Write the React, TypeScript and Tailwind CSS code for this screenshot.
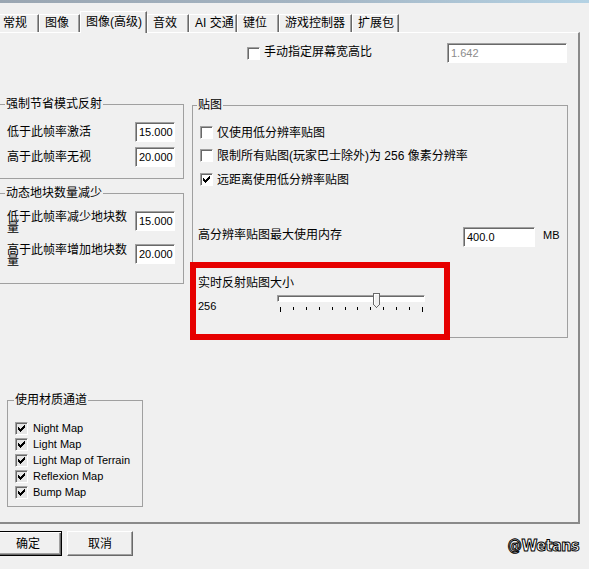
import type { ReactNode } from 'react'

const tabs = [
  { label: '常规', w: 'w-[42px] -ml-[3px]', active: false },
  { label: '图像', w: 'w-[41px]', active: false },
  { label: '图像(高级)', w: 'w-[67px]', active: true },
  { label: '音效', w: 'w-[42px]', active: false },
  { label: 'AI 交通', w: 'w-[48px]', active: false },
  { label: '键位', w: 'w-[42px]', active: false },
  { label: '游戏控制器', w: 'w-[73px]', active: false },
  { label: '扩展包', w: 'w-[47px]', active: false },
]

const materials = ['Night Map', 'Light Map', 'Light Map of Terrain', 'Reflexion Map', 'Bump Map']

// pixel runs of the classic 7x7 check glyph
const checkRuns: [number, number, number][] = [
  [8, 2, 1], [7, 3, 2], [2, 4, 1], [6, 4, 3], [2, 5, 2], [5, 5, 3], [2, 6, 5], [3, 7, 3], [4, 8, 1],
]

function Checkbox({ checked = false, grey = false }: { checked?: boolean; grey?: boolean }) {
  return (
    <span
      className={`relative inline-block w-[13px] h-[13px] shrink-0 border border-t-[#a0a0a0] border-l-[#a0a0a0] border-r-white border-b-white shadow-[inset_1px_1px_0_#696969] ${
        grey ? 'bg-[#e6e6e6]' : 'bg-white'
      }`}
    >
      {checked && (
        <svg width="11" height="11" viewBox="0 0 11 11" className="absolute left-0 top-0" shapeRendering="crispEdges">
          {checkRuns.map(([x, y, w]) => (
            <rect key={`${x}-${y}`} x={x} y={y} width={w} height={1} fill="#000" />
          ))}
        </svg>
      )}
    </span>
  )
}

function Field({ value, w, disabled = false }: { value: string; w: string; disabled?: boolean }) {
  return (
    <div
      className={`${w} h-[20px] shrink-0 border border-t-[#a0a0a0] border-l-[#a0a0a0] border-r-white border-b-white shadow-[inset_1px_1px_0_#696969] bg-white pl-[3px] pt-px text-[11px] leading-[17px] ${
        disabled ? 'text-[#8c8c8c]' : 'text-black'
      }`}
    >
      {value}
    </div>
  )
}

function Group({ title, legendMl, className, children }: { title: string; legendMl: string; className: string; children: ReactNode }) {
  return (
    <fieldset className={`border border-[#a0a0a0] ${className}`}>
      <legend className={`${legendMl} px-px text-[12px] leading-[14px]`}>{title}</legend>
      {children}
    </fieldset>
  )
}

function RateRow({ label, value, className }: { label: string; value: string; className: string }) {
  return (
    <div className={`flex items-start pl-[9px] pr-[8px] ${className}`}>
      <span className="w-[125px] mt-[1px] text-[12px] leading-[11px]">{label}</span>
      <div className="ml-auto">
        <Field value={value} w="w-[40px]" />
      </div>
    </div>
  )
}

function Slider() {
  return (
    <div className="relative w-[148px] h-[20px] mt-[5px]">
      <div className="absolute left-0 top-0 w-[148px] h-[7px] border border-t-[#a0a0a0] border-l-[#a0a0a0] border-r-white border-b-white shadow-[inset_1px_1px_0_#696969] bg-white" />
      <svg width="7" height="15" viewBox="0 0 7 15" className="absolute left-[96px] -top-[2px]" shapeRendering="crispEdges">
        <path d="M0.5 0.5 H6.5 V11.5 L3.5 14.5 L0.5 11.5 Z" fill="#f0f0f0" stroke="#696969" />
        <path d="M1.5 11 V1.5 H5.5" fill="none" stroke="#fff" />
      </svg>
      <div className="absolute left-[3px] top-[12px] w-[143px] flex justify-between items-start">
        {Array.from({ length: 12 }, (_, i) => (
          <span key={i} className={`w-px bg-black ${i === 0 || i === 11 ? 'h-[5px]' : 'h-[3px]'}`} />
        ))}
      </div>
    </div>
  )
}

export default function App() {
  return (
    <div className="w-[589px] h-[569px] overflow-hidden bg-[#f0f0f0] text-black [font-family:'Liberation_Sans','Noto_Sans_CJK_SC',sans-serif]">
      <div className="h-[3px] bg-linear-to-r from-[#9aa6b2] via-[#a4b4c2] to-[#b4d2e4]" />

      {/* tab strip */}
      <div className="flex items-end h-[29px]">
        {tabs.map(t =>
          t.active ? (
            <div
              key={t.label}
              className={`relative z-10 ${t.w} h-[22px] -mb-px pl-[5px] pt-[2px] text-[12px] leading-[16px] bg-[#f0f0f0] border-t border-l border-t-white border-l-white border-r border-r-[#696969] shadow-[inset_-1px_0_0_#a0a0a0] whitespace-nowrap`}
            >
              {t.label}
            </div>
          ) : (
            <div
              key={t.label}
              className={`${t.w} h-[18px] pl-[5px] text-[12px] leading-[16px] border-t border-l border-t-white border-l-white border-r border-r-[#696969] shadow-[inset_-1px_0_0_#a0a0a0] whitespace-nowrap`}
            >
              {t.label}
            </div>
          )
        )}
      </div>

      {/* tab page */}
      <div className="w-[580px] h-[492px] border-t border-t-white border-r-2 border-r-[#8a8a8a] border-b-2 border-b-[#8a8a8a] text-[12px]">
        <div className="flex items-center h-[20px] mt-[10px] pl-[247px]">
          <Checkbox />
          <span className="ml-[4px] w-[183px] leading-[14px] -mt-[2px]">手动指定屏幕宽高比</span>
          <Field value="1.642" w="w-[120px]" disabled />
        </div>

        <div className="flex items-start mt-[34px]">
          {/* left column */}
          <div className="w-[184px] shrink-0">
            <Group title="强制节省模式反射" legendMl="ml-[7px]" className="-ml-[3px] w-[187px] h-[82px]">
              <div className="flex items-center pl-[9px] pr-[8px] mt-[11px]">
                <span className="leading-[14px]">低于此帧率激活</span>
                <div className="ml-auto">
                  <Field value="15.000" w="w-[40px]" />
                </div>
              </div>
              <div className="flex items-center pl-[9px] pr-[8px] mt-[5px]">
                <span className="leading-[14px]">高于此帧率无视</span>
                <div className="ml-auto">
                  <Field value="20.000" w="w-[40px]" />
                </div>
              </div>
            </Group>

            <Group title="动态地块数量减少" legendMl="ml-[7px]" className="-ml-[3px] w-[187px] h-[98px] mt-[7px]">
              <RateRow label="低于此帧率减少地块数量" value="15.000" className="mt-[11px]" />
              <RateRow label="高于此帧率增加地块数量" value="20.000" className="mt-[10px]" />
            </Group>

            <Group title="使用材质通道" legendMl="ml-[6px]" className="ml-[7px] w-[136px] h-[114px] mt-[109px]">
              <div className="mt-[13px] pl-[7px]">
                {materials.map(m => (
                  <div key={m} className="flex items-center gap-[5px] h-[16px]">
                    <Checkbox checked grey />
                    <span className="text-[11px] leading-[14px] whitespace-nowrap">{m}</span>
                  </div>
                ))}
              </div>
            </Group>
          </div>

          {/* right column */}
          <Group title="贴图" legendMl="ml-[4px]" className="ml-[8px] mt-[1px] w-[376px] h-[240px]">
            <div className="flex items-center gap-[4px] h-[13px] pl-[7px] mt-[14px]">
              <Checkbox />
              <span className="leading-[14px]">仅使用低分辨率贴图</span>
            </div>
            <div className="flex items-center gap-[4px] h-[13px] pl-[7px] mt-[10px]">
              <Checkbox />
              <span className="leading-[14px] whitespace-nowrap">限制所有贴图(玩家巴士除外)为 256 像素分辨率</span>
            </div>
            <div className="flex items-center gap-[4px] h-[13px] pl-[7px] mt-[11px]">
              <Checkbox checked />
              <span className="leading-[14px]">远距离使用低分辨率贴图</span>
            </div>

            <div className="flex items-start pl-[5px] mt-[41px]">
              <span className="flex-1 mt-[1px] leading-[14px]">高分辨率贴图最大使用内存</span>
              <Field value="400.0" w="w-[72px]" />
              <span className="w-[24px] ml-[8px] mt-[2px] text-[11px] leading-[12px]">MB</span>
            </div>

            <div className="relative -ml-[3px] mt-[15px] w-[260px] h-[78px] border-[6px] border-[#e60000] pl-[2px] pt-[8px]">
              <div className="leading-[14px]">实时反射贴图大小</div>
              <div className="flex items-start">
                <span className="w-[79px] mt-[9px] text-[11px] leading-[14px]">256</span>
                <Slider />
              </div>
            </div>
          </Group>
        </div>
      </div>

      {/* dialog buttons */}
      <div className="flex items-start mt-[7px]">
        <button className="-ml-[6px] w-[68px] h-[25px] text-[12px] leading-[14px] border border-black shadow-[inset_1px_1px_0_#fff,inset_-1px_-1px_0_#696969,inset_-2px_-2px_0_#a0a0a0] bg-[#f0f0f0]">
          确定
        </button>
        <button className="ml-[5px] w-[66px] h-[25px] text-[12px] leading-[14px] border border-t-white border-l-white border-r-[#696969] border-b-[#696969] shadow-[inset_-1px_-1px_0_#a0a0a0] bg-[#f0f0f0]">
          取消
        </button>
        <span className="ml-auto mr-[10px] mt-[5px] text-[16px] leading-[20px] font-bold text-white [-webkit-text-stroke:1px_#000] [font-family:'DejaVu_Sans_Condensed','DejaVu_Sans',sans-serif] tracking-[-0.5px]">
          @Wetans
        </span>
      </div>
    </div>
  )
}
